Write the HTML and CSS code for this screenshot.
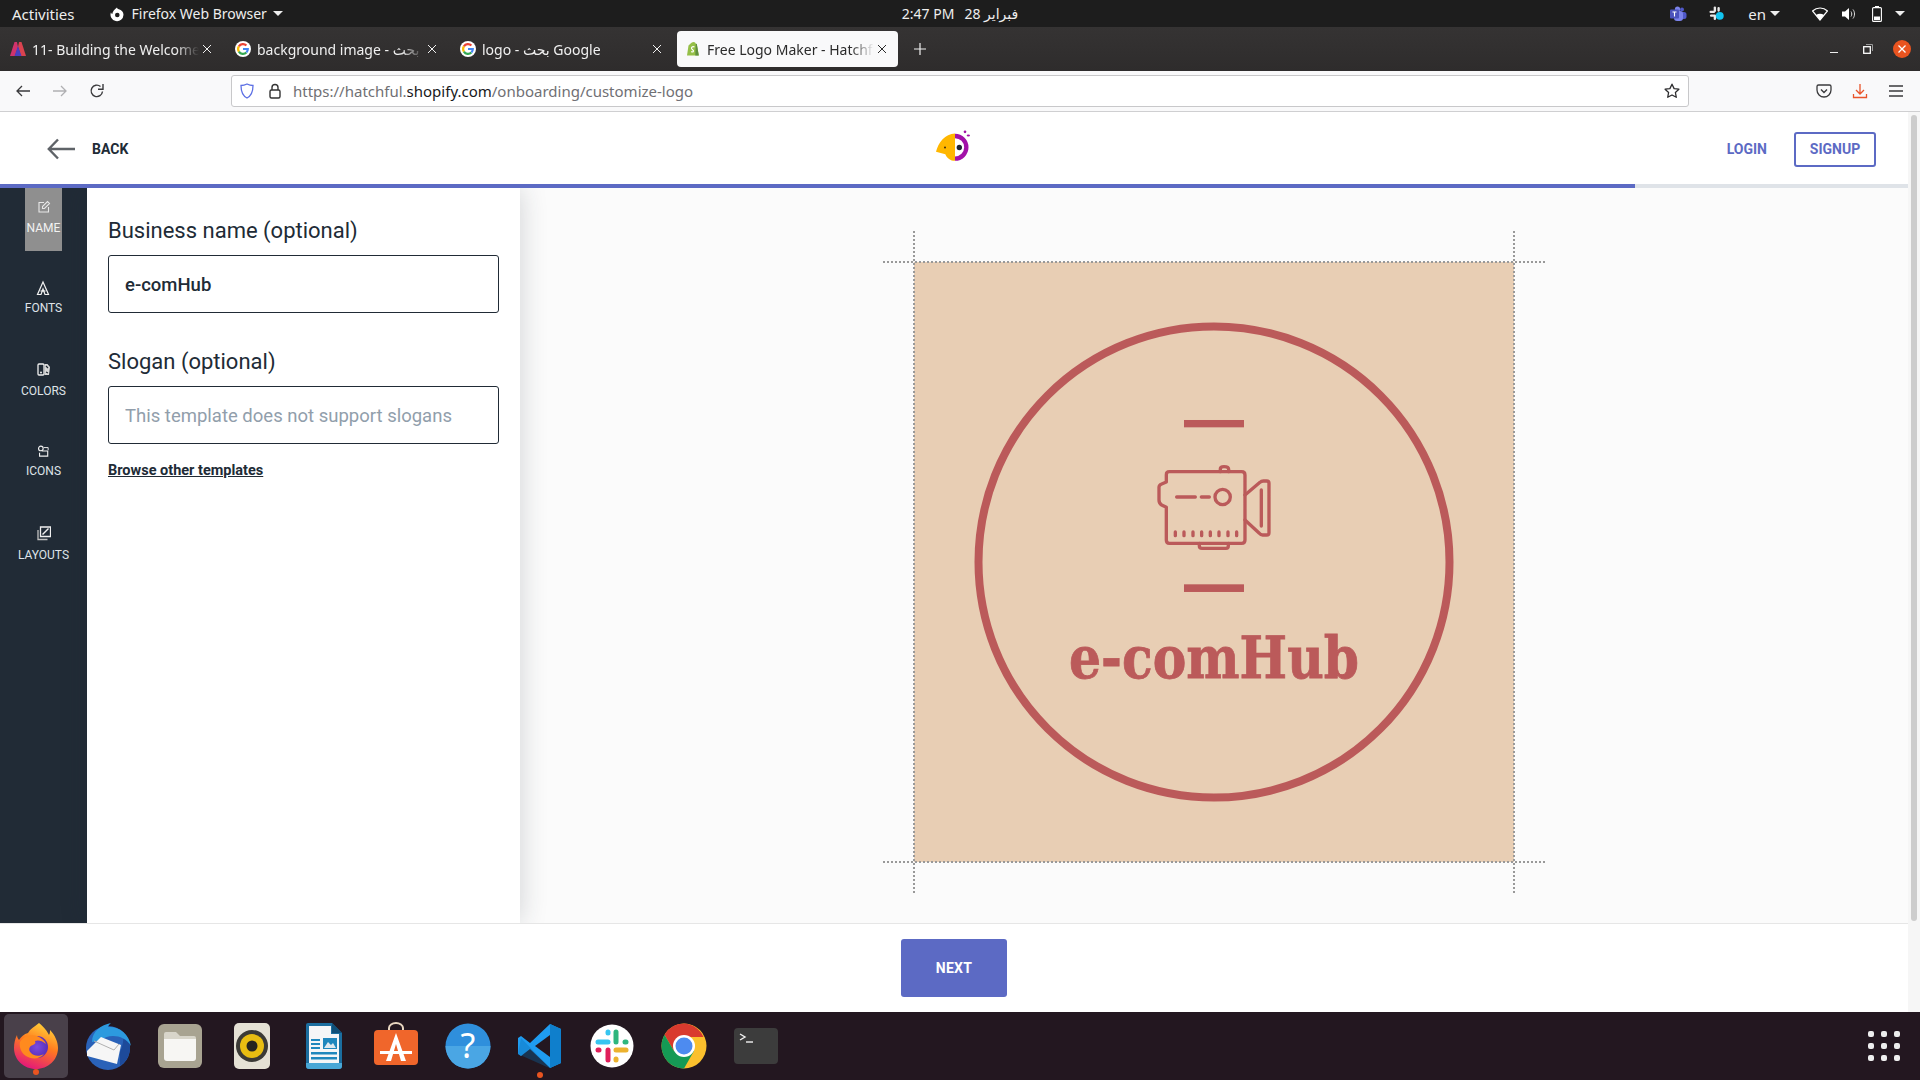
FILE: index.html
```html
<!DOCTYPE html>
<html lang="en">
<head>
<meta charset="utf-8">
<title>Free Logo Maker - Hatchful</title>
<link rel="stylesheet" href="styles.css">
</head>
<body>
<svg class="defs" width="0" height="0">
  <symbol id="g-fav" viewBox="0 0 16 16">
    <circle cx="8" cy="8" r="8" fill="#fff"/>
    <g fill="none" stroke-width="2.200">
      <path d="M3.900 5.400A4.800 4.800 0 0 1 11.400 4.600" stroke="#ea4335"/>
      <path d="M3.900 5.400A4.800 4.800 0 0 0 3.900 10.600" stroke="#fbbc05"/>
      <path d="M3.900 10.600A4.800 4.800 0 0 0 11.400 11.400" stroke="#34a853"/>
      <path d="M11.400 11.400A4.800 4.800 0 0 0 12.800 8H8" stroke="#4285f4"/>
    </g>
  </symbol>
  <symbol id="x" viewBox="0 0 10 10">
    <path d="M1 1l8 8M9 1L1 9" fill="none" stroke="currentColor" stroke-width="1"/>
  </symbol>
</svg>

<header class="topbar">
  <div class="top-left">
    <span class="activities">Activities</span>
    <span class="app-menu">
      <svg class="app-ico" viewBox="0 0 16 16"><path d="M8 1.500c.3 1 .9 1.500 1.800 1.800C12.500 4 14.500 6 14.500 8.800A6.500 6.500 0 1 1 2 6.200c.2 1 .7 1.500 1.300 1.900C3.500 5.500 5.500 3.200 8 1.500z" fill="#fff"/><circle cx="8.300" cy="9" r="2.300" fill="#1d1d1d"/></svg>
      Firefox Web Browser
      <i class="caret"></i>
    </span>
  </div>
  <div class="clock"><span>2:47 PM</span><span>28 فبراير</span></div>
  <div class="top-right">
    <svg class="tray tray-teams" viewBox="0 0 18 16"><circle cx="13" cy="3.500" r="2" fill="#5059c9"/><rect x="10" y="6" width="7.500" height="7" rx="2.500" fill="#5059c9"/><circle cx="8.500" cy="3" r="2.600" fill="#7b83eb"/><rect x="5" y="5" width="9" height="10" rx="3" fill="#7b83eb"/><rect x="1" y="3.500" width="9" height="9" rx="1" fill="#4b53bc"/><path d="M3.500 6h4M5.500 6v4.500" stroke="#fff" stroke-width="1.100"/></svg>
    <svg class="tray tray-slack" viewBox="0 0 16 16"><g fill="#e8e8e8"><rect x="5" y="0.500" width="2.500" height="6" rx="1.200"/><rect x="0.500" y="5" width="6" height="2.500" rx="1.200"/><rect x="9" y="1" width="2.500" height="5" rx="1.200"/><rect x="1" y="9" width="5" height="2.500" rx="1.200"/><rect x="5" y="9" width="2.500" height="6" rx="1.200"/></g><circle cx="11.500" cy="10.500" r="4.200" fill="#12c5f0"/></svg>
    <span class="lang">en<i class="caret"></i></span>
    <svg class="tray tray-wifi" viewBox="0 0 16 14"><path d="M8 13L.5 4C5 .2 11-.2 15.500 4z" fill="none" stroke="#fff" stroke-width="1.200"/><path d="M8 13L4 8c2.500-1.800 5.500-1.800 8 0z" fill="#fff"/></svg>
    <svg class="tray tray-vol" viewBox="0 0 16 14"><path d="M1 4.500h3L8 1v12L4 9.500H1z" fill="#fff"/><path d="M10 4.500c1 1.500 1 3.500 0 5M12 2.500c2 2.500 2 6.500 0 9" fill="none" stroke="#ddd" stroke-width="1"/></svg>
    <svg class="tray tray-bat" viewBox="0 0 10 16"><rect x="3" y="0" width="4" height="2" fill="#fff"/><rect x=".6" y="1.600" width="8.800" height="13.800" rx="1" fill="none" stroke="#fff" stroke-width="1.100"/><rect x="2" y="10.500" width="6" height="3.500" fill="#fff"/></svg>
    <i class="caret caret-last"></i>
  </div>
</header>

<div class="tabbar">
  <div class="tab">
    <svg class="fav" viewBox="0 0 16 16"><path d="M0 15L4.500 1h2.500l1 5-3 9z" fill="#d0336c"/><path d="M8 6l1-5h2.500L16 15h-5z" fill="#d9434f"/><path d="M4.500 15L8 5l3.500 10z" fill="#4a3fc0"/></svg>
    <span class="tab-text">11- Building the Welcome Screen</span>
    <svg class="tab-x"><use href="#x"/></svg>
  </div>
  <div class="tab">
    <svg class="fav"><use href="#g-fav"/></svg>
    <span class="tab-text">background image - بحث Google</span>
    <svg class="tab-x"><use href="#x"/></svg>
  </div>
  <div class="tab">
    <svg class="fav"><use href="#g-fav"/></svg>
    <span class="tab-text">logo - بحث Google</span>
    <svg class="tab-x"><use href="#x"/></svg>
  </div>
  <div class="tab tab-active">
    <svg class="fav" viewBox="0 0 16 16"><path d="M2 14.500L3.500 4.500C5 3.500 6 1 8.500 1c1.500 0 2 1 2.300 1.800l1 .2 2 11.500z" fill="#95bf47"/><path d="M10.800 2.800l1 .2 2 11.500-3.500 0z" fill="#5e8e3e"/><path d="M9.500 6c-2-1-3.500.5-2.800 1.800.6 1 2 1.200 1.800 2.400-.2 1-1.500.8-2.300.2" fill="none" stroke="#fff" stroke-width="1.200"/></svg>
    <span class="tab-text">Free Logo Maker - Hatchful</span>
    <svg class="tab-x"><use href="#x"/></svg>
  </div>
  <svg class="new-tab" viewBox="0 0 12 12"><path d="M6 0v12M0 6h12" stroke="#f0f0f0" stroke-width="1.200"/></svg>
  <div class="win-controls">
    <span class="win-min"></span>
    <svg class="win-restore" viewBox="0 0 10 10"><rect x=".7" y="2.700" width="6.600" height="6.600" fill="none" stroke="#fff" stroke-width="1.300"/><path d="M3 .5h6.500V7" fill="none" stroke="#999" stroke-width="1"/></svg>
    <span class="win-close"><svg viewBox="0 0 10 10"><path d="M1.500 1.500l7 7M8.500 1.500l-7 7" stroke="#fff" stroke-width="1.300"/></svg></span>
  </div>
</div>

<nav class="navbar">
  <svg class="nav-ico" viewBox="0 0 16 16"><path d="M15 8H2M7 3L2 8l5 5" fill="none" stroke="#3a3a3c" stroke-width="1.300"/></svg>
  <svg class="nav-ico" viewBox="0 0 16 16"><path d="M1 8h13M9 3l5 5-5 5" fill="none" stroke="#b0b0b2" stroke-width="1.300"/></svg>
  <svg class="nav-ico" viewBox="0 0 16 16"><path d="M13.500 8.500A5.700 5.700 0 1 1 11.500 3.500" fill="none" stroke="#3a3a3c" stroke-width="1.400"/><path d="M14 1v5.200H9" fill="none" stroke="#3a3a3c" stroke-width="1.400"/></svg>
  <div class="urlbar">
    <svg class="shield" viewBox="0 0 14 16"><path d="M7 1c2 1 4 1.500 6 1.500C13 9 11 13 7 15 3 13 1 9 1 2.500 3 2.500 5 2 7 1z" fill="#fff" stroke="#5d70e4" stroke-width="1.300"/></svg>
    <svg class="lock" viewBox="0 0 14 16"><rect x="2" y="7" width="10" height="8" rx="1.500" fill="none" stroke="#333" stroke-width="1.400"/><path d="M4 7V4.500a3 3 0 0 1 6 0V7" fill="none" stroke="#333" stroke-width="1.400"/></svg>
    <span class="url">https://hatchful.<b>shopify.com</b>/onboarding/customize-logo</span>
    <svg class="star" viewBox="0 0 16 16"><path d="M8 1.200l2.100 4.400 4.800.6-3.500 3.300.9 4.800L8 12l-4.300 2.300.9-4.800L1.100 6.200l4.800-.6z" fill="none" stroke="#2c2c2e" stroke-width="1.300" stroke-linejoin="round"/></svg>
  </div>
  <div class="nav-right">
    <svg class="nav-ico" viewBox="0 0 16 16"><path d="M2.500 2h11A1.500 1.500 0 0 1 15 3.500V7A7 7 0 0 1 1 7V3.500A1.500 1.500 0 0 1 2.500 2z" fill="none" stroke="#3a3a3c" stroke-width="1.300"/><path d="M5 6.500L8 9.500l3-3" fill="none" stroke="#3a3a3c" stroke-width="1.400"/></svg>
    <svg class="nav-ico" viewBox="0 0 16 16"><path d="M8 1v9.500M4 7l4 4 4-4M1.500 11v3.500h13V11" fill="none" stroke="#e9542a" stroke-width="1.300"/></svg>
    <svg class="nav-ico" viewBox="0 0 16 16"><path d="M1 3h14M1 8h14M1 13h14" stroke="#3a3a3c" stroke-width="1.300"/></svg>
  </div>
</nav>

<div class="page">
  <div class="page-main">
    <div class="page-header">
      <a class="back">
        <svg class="back-arrow" viewBox="0 0 28 22"><path d="M28 11H2M11 1.500L1.800 11 11 20.500" fill="none" stroke="#5f6368" stroke-width="2.400"/></svg>
        <span>BACK</span>
      </a>
      <svg class="brand" viewBox="50 45 105 92"><path d="M107 55C77 56 57 82 50 110l28 7c5 12 15 20 29 20z" fill="#ffb700"/><path d="M107 56a40.500 40.500 0 0 1 0 81v-13a27.500 27.500 0 0 0 0-55z" fill="#a211a8"/><circle cx="120" cy="97" r="8" fill="#1d2433"/><circle cx="77" cy="97" r="3" fill="#3a2a10"/><circle cx="137" cy="50" r="4" fill="#a211a8"/><ellipse cx="147" cy="61" rx="5" ry="3" fill="#a211a8"/></svg>
      <div class="auth">
        <a class="login">LOGIN</a>
        <a class="signup">SIGNUP</a>
      </div>
    </div>
    <div class="progress"><div class="progress-fill" style="width:1635px"></div></div>

    <div class="workspace">
      <aside class="sidebar">
        <div class="side-item side-active">
          <svg class="side-ico" viewBox="0 0 14 14"><path d="M7 2.500H2v9.500h9.500V7" fill="none" stroke="#e8e8e8" stroke-width="1.100"/><path d="M5.500 8.500V6.500l5-5 2 2-5 5z" fill="none" stroke="#e8e8e8" stroke-width="1.100"/></svg>
          <span>NAME</span>
        </div>
        <div class="side-item">
          <svg class="side-ico" viewBox="0 0 14 14"><path d="M7 1L1.500 13.500h3.500l2-5.500 2 5.500h3.500z" fill="none" stroke="#f2f2f2" stroke-width="1.200"/><path d="M4.500 10h5" stroke="#f2f2f2" stroke-width="1.200"/></svg>
          <span>FONTS</span>
        </div>
        <div class="side-item side-item-wide">
          <svg class="side-ico" viewBox="0 0 14 14"><rect x="1" y="2" width="6" height="11" rx="1" fill="none" stroke="#f0f0f0" stroke-width="1.300"/><path d="M7.500 2h3l2.500 3-1 8H7.500z" fill="#d8d8d8"/><path d="M9 4l2 2M9 10l2 1" stroke="#222b35" stroke-width="1.200"/><circle cx="4" cy="10.500" r="1" fill="#f0f0f0"/></svg>
          <span>COLORS</span>
        </div>
        <div class="side-item">
          <svg class="side-ico side-ico-sm" viewBox="0 0 14 14"><circle cx="4.500" cy="4" r="2.700" fill="none" stroke="#f0f0f0" stroke-width="1.300"/><path d="M6 7h6.500v6H3V9" fill="none" stroke="#f0f0f0" stroke-width="1.300"/><path d="M8 3h5v3" fill="none" stroke="#f0f0f0" stroke-width="1.100"/></svg>
          <span>ICONS</span>
        </div>
        <div class="side-item side-item-wide">
          <svg class="side-ico" viewBox="0 0 14 14"><path d="M3.500 1h10v9.500h-10z" fill="none" stroke="#f0f0f0" stroke-width="1.300"/><path d="M1 4v9.500h9.500" fill="none" stroke="#c0c0c0" stroke-width="1.300"/><path d="M5.500 8.500l6-6" stroke="#f0f0f0" stroke-width="1.500"/></svg>
          <span>LAYOUTS</span>
        </div>
      </aside>

      <section class="panel">
        <label class="field-label" for="biz">Business name (optional)</label>
        <input class="field-input" id="biz" value="e-comHub">
        <label class="field-label field-label-2" for="slogan">Slogan (optional)</label>
        <input class="field-input" id="slogan" placeholder="This template does not support slogans">
        <a class="browse">Browse other templates</a>
      </section>

      <main class="canvas">
        <div class="logo-frame">
          <i class="guide gh gh-top"></i><i class="guide gh gh-bottom"></i>
          <i class="guide gv gv-left"></i><i class="guide gv gv-right"></i>
          <svg class="logo-art" viewBox="0 0 600 600">
            <rect width="600" height="600" fill="#e8ceb4"/>
            <circle cx="300" cy="300" r="235.500" fill="none" stroke="#bb5a5a" stroke-width="8"/>
            <g transform="translate(186 138) scale(.3333)">
              <rect x="252" y="60" width="180" height="22" fill="#bb5a5a"/>
              <rect x="252" y="553" width="180" height="23" fill="#bb5a5a"/>
              <g fill="none" stroke="#bb5a5a" stroke-width="10" stroke-linecap="round" stroke-linejoin="round">
                <path d="M208 215H425Q435 215 435 225V420Q435 430 425 430H208Q199 430 199 420V322L185 315Q177 310 177 300V262Q177 255 185 252L199 246V224Q199 215 208 215Z"/>
                <path d="M361 215V207Q361 200 372 200Q386 200 386 208V215"/>
                <path d="M298 430V438Q298 445 306 445H378Q385 445 385 438V430"/>
                <path d="M435 285L480 247Q484 243 490 243H500Q507 243 507 250V398Q507 405 500 405H488Q482 405 478 400L435 360"/>
                <path d="M484 270V378M230 291H286M304 291H328"/>
                <circle cx="368" cy="291" r="23"/>
                <path d="M226 396V407M252 396V407M279 396V407M305 396V407M331 396V407M357 396V407M384 396V407M410 396V407"/>
              </g>
            </g>
            <text class="logo-name" x="300" y="416" text-anchor="middle" textLength="290" lengthAdjust="spacingAndGlyphs">e-comHub</text>
          </svg>
        </div>
      </main>
    </div>

    <footer class="page-footer">
      <button class="next">NEXT</button>
    </footer>
  </div>
  <div class="scrollbar"><div class="thumb"></div></div>
</div>

<div class="dock">
  <div class="dock-item dock-active">
    <svg class="dock-ico" viewBox="0 0 48 48">
      <defs>
        <linearGradient id="ff" x1=".7" y1="0" x2=".3" y2="1"><stop offset="0" stop-color="#ffd43a"/><stop offset=".45" stop-color="#ff7a1f"/><stop offset="1" stop-color="#e3137e"/></linearGradient>
        <radialGradient id="ffp"><stop offset="0" stop-color="#7a4be0"/><stop offset="1" stop-color="#5b2fb8"/></radialGradient>
      </defs>
      <path d="M27 1c6 5 8 8 10 12 1-2 1-3 1-5 5 5 8 12 8 18 0 12-10 21-22 21S2 38 2 26c0-5 1-9 3-13 0 2 1 4 2 5 2-3 5-6 9-7 2-4 6-6 11-10z" fill="url(#ff)"/>
      <circle cx="25" cy="25" r="11" fill="url(#ffp)"/>
      <path d="M8 20c3-5 10-8 17-6 5 2 8 5 9 8-4-4-9-4-11-3 1 2 0 3-2 4-4 1-5 5-2 8 3 3 8 4 13 1-4 5-12 6-18 2-5-3-7-9-6-14z" fill="#ff8a1e"/>
    </svg>
    <i class="run-dot"></i>
  </div>
  <div class="dock-item">
    <svg class="dock-ico" viewBox="0 0 48 48">
      <circle cx="24" cy="26" r="22" fill="#2a62b8"/>
      <path d="M36 44c6-4 10-11 10-18 0-6-3-11-7-15 1 6 0 13-3 19z" fill="#1d4a9a"/>
      <path d="M8 20C8 9 17 3 27 1c-2 2-3 3-3 4 10-1 21 6 23 19-4-7-11-10-18-10-5 0-8 1-11 4z" fill="#2c9adf"/>
      <path d="M3 29L17 15 37 23 33 42 3 34z" fill="#f6f6f6"/>
      <path d="M10 19l20 9 5-6" fill="none" stroke="#b0b0b0" stroke-width="1"/>
    </svg>
  </div>
  <div class="dock-item">
    <svg class="dock-ico" viewBox="0 0 48 48">
      <rect x="2" y="2" width="44" height="44" rx="6" fill="#a8a391"/>
      <path d="M8 12a2 2 0 0 1 2-2h10l4 4H38a2 2 0 0 1 2 2v8H8z" fill="#d8d5ca"/>
      <path d="M8 17h32v19a3 3 0 0 1-3 3H11a3 3 0 0 1-3-3z" fill="#f7f6f3"/>
    </svg>
  </div>
  <div class="dock-item">
    <svg class="dock-ico" viewBox="0 0 48 48">
      <rect x="6" y="1" width="36" height="46" rx="5" fill="#e5e1d5"/>
      <circle cx="24" cy="24" r="16" fill="#3b3a36"/>
      <circle cx="24" cy="24" r="12" fill="#e8bd12"/>
      <circle cx="24" cy="24" r="5.500" fill="#26251f"/>
    </svg>
  </div>
  <div class="dock-item">
    <svg class="dock-ico" viewBox="0 0 48 48">
      <path d="M8 1h24l10 10v33a3 3 0 0 1-3 3H9a3 3 0 0 1-3-3V3a2 2 0 0 1 2-2z" fill="#1b6e9f"/>
      <path d="M9 4h22v8h8v32H9z" fill="#f5f6f7"/>
      <path d="M32 1l10 10H32z" fill="#0f4f78"/>
      <path d="M6 41h36v3a3 3 0 0 1-3 3H9a3 3 0 0 1-3-3z" fill="#49a7d6"/>
      <path d="M11 17h9v2h-9zM11 21h9v2h-9zM11 25h9v2h-9zM11 30h26v2.500H11zM11 35h26v2.500H11z" fill="#1f87bd"/>
      <rect x="23" y="16" width="14" height="11" fill="#1f87bd"/>
      <path d="M24 26l4-6 3 3 2-2 3 5z" fill="#dfe9ef"/>
    </svg>
  </div>
  <div class="dock-item">
    <svg class="dock-ico" viewBox="0 0 48 48">
      <path d="M17 9V6a7 5 0 0 1 14 0v3" fill="none" stroke="#e8d6c0" stroke-width="2"/>
      <rect x="2" y="8" width="44" height="35" rx="4" fill="#f0662b"/>
      <path d="M24 11L14 39h5l5-17 5 17h5z" fill="#fff"/>
      <path d="M8 29h32v3H8z" fill="#fff"/>
    </svg>
  </div>
  <div class="dock-item">
    <svg class="dock-ico" viewBox="0 0 48 48">
      <circle cx="24" cy="24" r="22.500" fill="#2f8fdc"/>
      <path d="M1.500 24a22.500 22.500 0 0 0 45 0z" fill="#4aa6e4"/>
      <text class="help-q" x="24" y="36" text-anchor="middle">?</text>
    </svg>
  </div>
  <div class="dock-item">
    <svg class="dock-ico" viewBox="0 0 48 48">
      <path d="M34 2l11 5v34l-11 5-20-19-9 7-3-2v-16l3-2 9 7z" fill="#1f9cf0"/>
      <path d="M34 13v22L19 24z" fill="#231720"/>
      <path d="M34 2l11 5v34l-11 5z" fill="#0f7fcc"/>
      <path d="M5 16l29 30-3-1L2 32z" fill="#0a6ab0" opacity=".35"/>
    </svg>
  </div>
  <div class="dock-item">
    <svg class="dock-ico" viewBox="0 0 48 48">
      <circle cx="24" cy="24" r="21.500" fill="#fff"/>
      <g stroke-width="5" stroke-linecap="round" fill="none">
        <path d="M10 20h10" stroke="#36c5f0"/><path d="M20 10v1" stroke="#36c5f0"/>
        <path d="M28 10v10" stroke="#2eb67d"/><path d="M38 20h-1" stroke="#2eb67d"/>
        <path d="M38 28H28" stroke="#ecb22e"/><path d="M28 38v-1" stroke="#ecb22e"/>
        <path d="M20 38V28" stroke="#e01e5a"/><path d="M10 28h1" stroke="#e01e5a"/>
      </g>
    </svg>
  </div>
  <div class="dock-item">
    <svg class="dock-ico" viewBox="0 0 48 48">
      <circle cx="24" cy="24" r="22.500" fill="#fbc02d"/>
      <path d="M24 1.500A22.500 22.500 0 0 0 4.500 12.800L14 29l10-14h19.500A22.500 22.500 0 0 0 24 1.500z" fill="#d93a2e"/>
      <path d="M4.500 12.800A22.500 22.500 0 0 0 24 46.500L34 29H14z" fill="#159a55"/>
      <circle cx="24" cy="24" r="11" fill="#fff"/>
      <circle cx="24" cy="24" r="8.500" fill="#4d8bf0"/>
    </svg>
  </div>
  <div class="dock-item">
    <svg class="dock-ico" viewBox="0 0 48 48">
      <rect x="2" y="6" width="44" height="36" rx="4" fill="#3c3c3c"/>
      <path d="M8 12l5 3-5 3" fill="none" stroke="#f2f2f2" stroke-width="1.400"/>
      <path d="M14 20h7" stroke="#f2f2f2" stroke-width="1.400"/>
    </svg>
  </div>
  <i class="run-dot run-dot-code"></i>
  <div class="apps-grid"><i></i><i></i><i></i><i></i><i></i><i></i><i></i><i></i><i></i></div>
</div>
</body>
</html>
```

FILE: styles.css
```css
* { box-sizing: border-box; }
html, body { margin: 0; height: 100%; overflow: hidden; }
body {
  width: 1920px;
  height: 1080px;
  display: flex;
  flex-direction: column;
  font-family: "Noto Sans", "DejaVu Sans", sans-serif;
  color: #212b36;
}
.defs { position: absolute; }
a { text-decoration: none; }

.topbar {
  height: 27px;
  flex: none;
  background: #1d1d1d;
  color: #eee;
  font-size: 14px;
  display: grid;
  grid-template-columns: 1fr auto 1fr;
  align-items: center;
  padding: 0 12px;
}
.top-left { display: flex; align-items: center; gap: 34px; }
.activities { font-size: 15px; }
.app-menu { display: flex; align-items: center; }
.app-ico { width: 16px; height: 16px; margin-right: 7px; }
.caret {
  width: 0; height: 0;
  border-left: 5px solid transparent;
  border-right: 5px solid transparent;
  border-top: 5px solid #eee;
  display: inline-block;
  margin-left: 6px;
}
.clock { display: flex; gap: 10px; font-size: 14px; }
.top-right { display: flex; align-items: center; justify-content: flex-end; }
.tray { display: block; flex: none; }
.tray-teams { width: 18px; height: 16px; }
.tray-slack { width: 15px; height: 15px; margin-left: 22px; }
.lang { margin-left: 24px; display: flex; align-items: center; font-size: 15px; }
.lang .caret { margin-left: 4px; }
.tray-wifi { width: 16px; height: 14px; margin-left: 32px; }
.tray-vol { width: 16px; height: 14px; margin-left: 13px; }
.tray-bat { width: 10px; height: 16px; margin-left: 15px; }
.caret-last { margin-left: 13px; margin-right: 3px; }

.tabbar {
  height: 44px;
  flex: none;
  background: linear-gradient(#353333, #2e2c2c);
  display: flex;
  align-items: center;
  gap: 4px;
  padding-left: 2px;
  color: #f0f0f0;
  font-size: 14px;
}
.tab {
  width: 221px;
  height: 36px;
  display: flex;
  align-items: center;
  padding-left: 8px;
  border-radius: 4px;
  flex: none;
}
.tab-active { background: #f9f9fa; color: #2b2b2b; }
.fav { width: 16px; height: 16px; flex: none; margin-right: 6px; }
.tab-text {
  flex: 1;
  min-width: 0;
  white-space: nowrap;
  overflow: hidden;
  -webkit-mask-image: linear-gradient(to right, #000 86%, transparent 100%);
  mask-image: linear-gradient(to right, #000 86%, transparent 100%);
}
.tab-x { width: 10px; height: 10px; flex: none; margin: 0 11px 0 3px; color: currentColor; }
.new-tab { width: 12px; height: 12px; margin-left: 12px; flex: none; }
.win-controls {
  margin-left: auto;
  display: flex;
  align-items: center;
  gap: 14px;
  padding-right: 9px;
}
.win-min { width: 8px; height: 1px; background: #eee; margin: 6px 6px 0; }
.win-restore { width: 10px; height: 10px; margin: 0 5px; }
.win-close {
  width: 18px; height: 18px;
  border-radius: 50%;
  background: #e95420;
  display: flex;
  align-items: center;
  justify-content: center;
  margin-left: 1px;
}
.win-close svg { width: 10px; height: 10px; }

.navbar {
  height: 41px;
  flex: none;
  background: #f9f9fa;
  border-bottom: 1px solid #cfcfd1;
  display: flex;
  align-items: center;
  padding: 0 16px 1px 15px;
}
.nav-ico { width: 16px; height: 16px; flex: none; display: block; }
.navbar > .nav-ico + .nav-ico { margin-left: 21px; }
.urlbar {
  width: 1458px;
  height: 32px;
  margin-left: 126px;
  background: #fff;
  border: 1px solid #c8c8ca;
  border-radius: 3px;
  display: flex;
  align-items: center;
  padding: 0 8px 0 9px;
  flex: none;
}
.shield { width: 14px; height: 16px; flex: none; margin-left: -1px; margin-right: 1px; }
.lock { width: 14px; height: 16px; margin-left: 13px; flex: none; }
.url { margin-left: 11px; font-size: 15px; color: #707074; flex: 1; padding-top: 1px; }
.url b { font-weight: 400; color: #18181a; }
.star { width: 16px; height: 16px; flex: none; }
.nav-right { margin-left: auto; display: flex; gap: 20px; }

.page { flex: 1; display: flex; min-height: 0; background: #fff; }
.page-main { flex: 1; min-width: 0; display: flex; flex-direction: column; }
.scrollbar { width: 12px; flex: none; background: #f6f6f6; padding: 3px; }
.thumb { height: 806px; background: #cdcdcd; border-radius: 3px; }

.page-header {
  height: 72px;
  flex: none;
  display: grid;
  grid-template-columns: 1fr auto 1fr;
  align-items: center;
  padding: 2px 32px 0 47px;
  font-family: Roboto, sans-serif;
  font-size: 14px;
  font-weight: 700;
}
.back { display: flex; align-items: center; gap: 17px; color: #212b36; }
.back-arrow { width: 28px; height: 22px; }
.brand { width: 35px; height: 31px; margin: -8px 0 0 -17px; }
.auth { display: flex; align-items: center; justify-content: flex-end; gap: 27px; color: #5c6ac4; }
.signup {
  width: 82px;
  height: 35px;
  border: 2px solid #5c6ac4;
  border-radius: 3px;
  display: flex;
  align-items: center;
  justify-content: center;
}
.progress { height: 4px; flex: none; background: #dfe3e8; }
.progress-fill { height: 100%; background: #5c6ac4; }

.workspace { flex: 1; min-height: 0; display: flex; overflow: hidden; }
.sidebar {
  width: 87px;
  flex: none;
  background: #212b36;
  display: grid;
  grid-template-rows: 63px 81px 82px 82px auto;
  justify-items: center;
  font-family: Roboto, sans-serif;
  font-size: 12px;
  color: #dfe3e8;
}
.side-item {
  display: flex;
  flex-direction: column;
  align-items: center;
  gap: 5px;
  padding-top: 29px;
}
.side-item-wide { gap: 7px; }
.side-active {
  width: 37px;
  background: #8f8f8f;
  padding-top: 11px;
  gap: 6px;
  color: #f2f2f2;
}
.side-ico { width: 14px; height: 16px; display: block; }
.side-ico-sm { width: 12px; }
.side-item span { line-height: 14px; }

.panel {
  width: 433px;
  flex: none;
  padding: 31px 21px 0 21px;
  background: #fff;
  box-shadow: 0 0 26px rgba(33, 43, 54, .2);
  position: relative;
  display: flex;
  flex-direction: column;
  font-family: Roboto, sans-serif;
}
.field-label { font-size: 22px; line-height: 24px; margin-bottom: 12px; color: #212b36; }
.field-label-2 { margin-top: 37px; }
.field-input {
  width: 391px;
  height: 58px;
  flex: none;
  border: 1px solid #212b36;
  border-radius: 3px;
  padding: 2px 16px 0;
  font: 500 18.500px Roboto, sans-serif;
  color: #212b36;
  background: #fff;
}
.field-input::placeholder { color: #919eab; font-weight: 400; opacity: 1; }
.browse {
  margin-top: 18px;
  font-size: 14.500px;
  font-weight: 700;
  line-height: 18px;
  color: #212b36;
  text-decoration: underline;
}

.canvas {
  flex: 1;
  min-width: 0;
  background: #fbfbfb;
  display: flex;
  justify-content: center;
  align-items: flex-start;
  padding-top: 74px;
}
.logo-frame { width: 600px; height: 600px; position: relative; flex: none; }
.logo-art { width: 600px; height: 600px; display: block; }
.logo-name { font: 700 58px "DejaVu Serif", "Liberation Serif", serif; fill: #bb5a5a; stroke: #bb5a5a; stroke-width: .8px; }
.guide { position: absolute; z-index: 1; }
.gh { left: -31px; right: -31px; height: 0; border-top: 2px dotted #999; }
.gv { top: -31px; bottom: -31px; width: 0; border-left: 2px dotted #999; }
.gh-top { top: -1px; }
.gh-bottom { bottom: -1px; }
.gv-left { left: -1px; }
.gv-right { right: -1px; }

.page-footer {
  height: 89px;
  flex: none;
  background: #fff;
  border-top: 1px solid #e6e6e6;
  display: flex;
  align-items: center;
  justify-content: center;
  position: relative;
}
.next {
  width: 106px;
  height: 58px;
  border: 0;
  border-radius: 3px;
  background: #5c6ac4;
  color: #fff;
  font: 700 14px Roboto, sans-serif;
  letter-spacing: .3px;
}

.dock {
  height: 68px;
  flex: none;
  background: #231720;
  display: flex;
  align-items: center;
  gap: 24px;
  padding: 0 20px 0 12px;
  position: relative;
}
.dock-item { width: 48px; height: 48px; position: relative; flex: none; }
.dock-active::before {
  content: "";
  position: absolute;
  left: -8px; right: -8px; top: -8px; bottom: -8px;
  background: #49404a;
  border-radius: 5px;
}
.dock-ico { width: 48px; height: 48px; display: block; position: relative; }
.run-dot {
  position: absolute;
  width: 6px; height: 6px;
  border-radius: 50%;
  background: #e95420;
  left: 21px;
  bottom: -5px;
}
.run-dot-code { left: 537px; bottom: 2px; }
.help-q { font: 400 34px "Noto Sans", sans-serif; fill: #fff; }
.apps-grid {
  margin-left: auto;
  display: grid;
  grid-template-columns: repeat(3, 6px);
  grid-auto-rows: 6px;
  column-gap: 7px;
  row-gap: 6px;
}
.apps-grid i { background: #eee; border-radius: 2px; }
```
